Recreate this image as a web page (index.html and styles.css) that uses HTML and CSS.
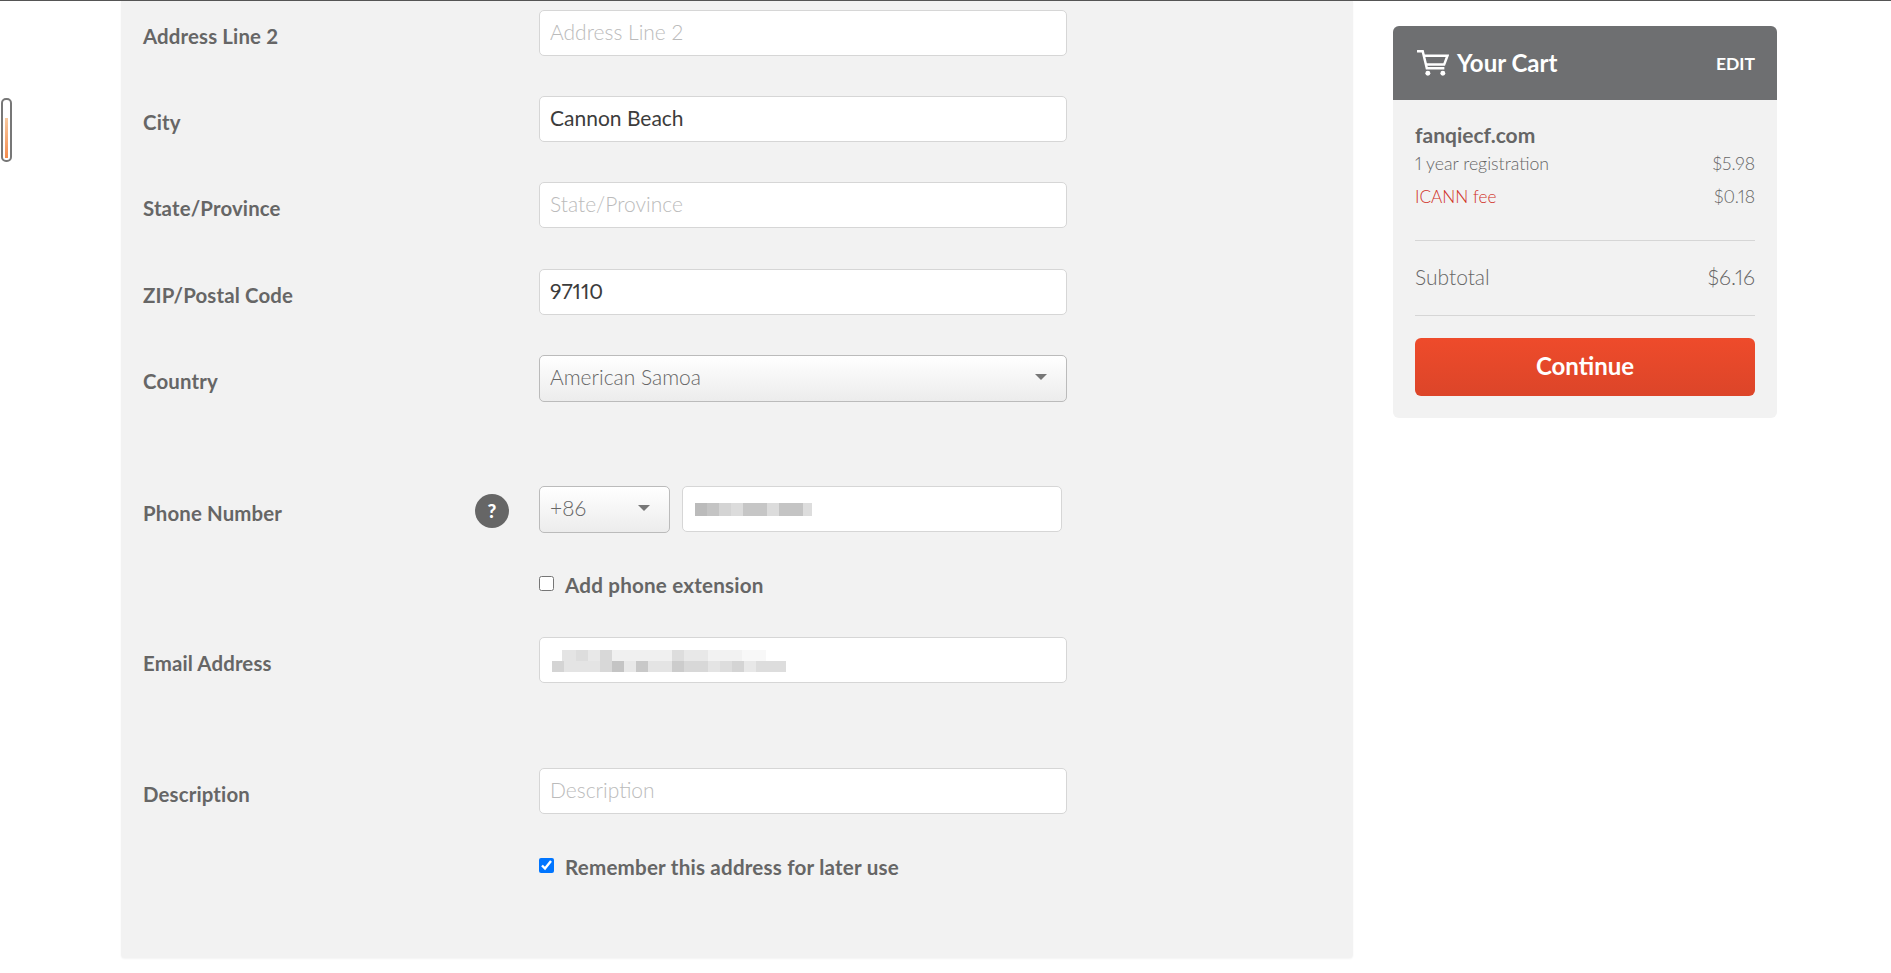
FILE: index.html
```html
<!DOCTYPE html>
<html lang="en">
<head>
<meta charset="utf-8">
<title>Checkout</title>
<link rel="stylesheet" href="styles.css">
</head>
<body>
<div class="meter"><div class="meter-fill"></div></div>
<main class="page">
  <form class="panel">
    <div class="row"><label class="label">Address Line 2</label><input class="input" placeholder="Address Line 2"></div>
    <div class="row"><label class="label">City</label><input class="input input-value" value="Cannon Beach"></div>
    <div class="row"><label class="label">State/Province</label><input class="input" placeholder="State/Province"></div>
    <div class="row"><label class="label">ZIP/Postal Code</label><input class="input input-value" value="97110"></div>
    <div class="row row-section"><label class="label">Country</label>
      <div class="select-wrap"><select class="select"><option>American Samoa</option></select></div>
    </div>
    <div class="row row-tight"><div class="label label-help"><label>Phone Number</label><span class="help">?</span></div>
      <div class="phone">
        <div class="select-wrap code-wrap"><select class="select code"><option>+86</option></select></div>
        <div class="masked phone-number"><input class="input"><span class="blur blur-phone"></span></div>
      </div>
    </div>
    <div class="row row-check"><span></span><label class="check"><input type="checkbox" class="box"><span>Add phone extension</span></label></div>
    <div class="row row-section"><label class="label">Email Address</label>
      <div class="masked"><input class="input"><span class="blur blur-email"></span></div>
    </div>
    <div class="row row-tight"><label class="label">Description</label><input class="input" placeholder="Description"></div>
    <div class="row row-check"><span></span><label class="check"><input type="checkbox" class="box" checked><span>Remember this address for later use</span></label></div>
  </form>
  <aside class="cart">
    <header class="cart-head">
      <svg class="cart-icon" viewBox="0 0 32 26" aria-hidden="true"><path d="M1 2h5.5l4 16.5h17" fill="none" stroke="#fff" stroke-width="2.4"/><path d="M7.5 6.5h23l-3.2 8.5H9.6" fill="none" stroke="#fff" stroke-width="2.4"/><circle cx="11.5" cy="23.5" r="2.4" fill="#fff"/><circle cx="26" cy="23.5" r="2.4" fill="#fff"/></svg>
      <span class="cart-title">Your Cart</span>
      <a class="cart-edit">EDIT</a>
    </header>
    <div class="cart-body">
      <div class="domain">fanqiecf.com</div>
      <div class="line"><span>1 year registration</span><span>$5.98</span></div>
      <div class="line line-fee"><span class="fee">ICANN fee</span><span>$0.18</span></div>
      <div class="subtotal"><span>Subtotal</span><span class="total">$6.16</span></div>
      <button type="button" class="continue">Continue</button>
    </div>
  </aside>
</main>
</body>
</html>
```
FILE: styles.css
```css
* { box-sizing: border-box; }
html, body { margin: 0; height: 973px; overflow: hidden; background: #fff; }
body { border-top: 1px solid #555; font-family: Lato, "Open Sans", sans-serif; color: #666; }
.page { display: flex; align-items: flex-start; padding-left: 121px; }
.panel { width: 1232px; height: 957px; padding: 9px 0 0 22px; background: #f2f2f2; border-radius: 0 0 4px 4px; box-shadow: 0 1px 2px rgba(0,0,0,.05); }
.row { display: grid; grid-template-columns: 396px 528px; height: 46px; margin-bottom: 40.2px; }
.row-section { margin-bottom: 85px; }
.row-tight { margin-bottom: 0; }
.row-check { margin-top: 41px; height: 64px; margin-bottom: 0; }
.label { padding-top: 7px; font-size: 20.4px; letter-spacing: .15px; font-weight: 700; line-height: 38px; color: #666; }
.label-help { display: flex; justify-content: space-between; align-items: flex-start; padding-right: 30px; padding-top: 8px; }
.help { width: 34px; height: 34px; border-radius: 50%; background: #666; color: #fff; font-size: 19px; font-weight: 900; line-height: 34px; text-align: center; letter-spacing: 0; }
.input { width: 100%; height: 46px; padding: 0 10px 3px; border: 1px solid #d6d6d6; border-radius: 5px; background: #fff; font: 300 21px Lato, sans-serif; font-variant-numeric: proportional-nums; color: #333; outline: none; }
.input::placeholder { color: #bbb; opacity: 1; }
.input-value { font-weight: 400; font-size: 21px; color: #3c3c3c; }
.select-wrap { position: relative; height: 47px; }
.select-wrap::after { content: ""; position: absolute; right: 20px; top: 19px; border: 6px solid transparent; border-top: 6px solid #777; border-bottom: 0; }
.select { width: 100%; height: 100%; padding: 0 10px 3px; appearance: none; border: 1px solid #bbb; border-radius: 5px; background: linear-gradient(#fff, #ececec); font: 300 21px Lato, sans-serif; color: #666; outline: none; }
.phone { display: flex; gap: 12px; width: 523px; }
.code-wrap { width: 131px; flex: none; }
.phone-number { flex: 1; }
.masked { position: relative; height: 46px; }
.blur { position: absolute; }
.blur-phone { left: 13px; top: 17px; width: 117px; height: 13px; background: linear-gradient(90deg, #bbb 0 12px, #c4c4c4 12px 24px, #d4d4d4 24px 36px, #dcdcdc 36px 48px, #c6c6c6 48px 72px, #dcdcdc 72px 84px, #c4c4c4 84px 108px, #ddd 108px 117px); }
.blur-email { left: 13px; top: 13px; width: 234px; height: 22px; background:
  linear-gradient(90deg, #d4d4d4 0 12px, #e4e4e4 12px 48px, #d8d8d8 48px 60px, #c4c4c4 60px 72px, #e8e8e8 72px 84px, #c8c8c8 84px 96px, #e4e4e4 96px 120px, #ccc 120px 132px, #d8d8d8 132px 156px, #e4e4e4 156px 168px, #ddd 168px 180px, #d4d4d4 180px 192px, #e8e8e8 192px 204px, #ddd 204px 234px) 0 100% / 100% 11px no-repeat,
  linear-gradient(90deg, #fff 0 10px, #e4e4e4 10px 24px, #ddd 24px 36px, #e8e8e8 36px 48px, #d8d8d8 48px 60px, #f0f0f0 60px 120px, #ddd 120px 132px, #e8e8e8 132px 156px, #f2f2f2 156px 190px, #f8f8f8 190px 214px, #fff 214px 234px) 0 0 / 100% 11px no-repeat; }
.check { display: flex; align-items: flex-start; gap: 11px; font-size: 20.6px; letter-spacing: .2px; font-weight: 700; line-height: 24px; color: #666; }
.box { width: 15px; height: 15px; margin: 3px 0 0; accent-color: #0075ff; }
.cart { width: 384px; margin: 25px 0 0 40px; border-radius: 6px; background: #f2f2f2; overflow: hidden; }
.cart-head { display: flex; align-items: center; height: 74px; padding: 0 22px 2px 23px; background: #6e6f71; color: #fff; }
.cart-icon { width: 33px; height: 27px; margin-right: 8px; }
.cart-title { flex: 1; font-size: 24px; font-weight: 700; }
.cart-edit { margin-top: 2px; font-size: 17.5px; font-weight: 700; }
.cart-body { padding: 23px 22px 22px; font-weight: 300; }
.domain { font-size: 21px; font-weight: 700; line-height: 26px; margin-top: -1px; }
.line { display: flex; justify-content: space-between; font-size: 17.7px; line-height: 26px; margin-top: 3px; font-variant-numeric: proportional-nums; }
.line-fee { margin-top: 7px; }
.fee { color: #d0301f; font-size: 17.2px; }
.subtotal { display: flex; justify-content: space-between; height: 76px; margin-top: 30px; border: solid #d6d6d6; border-width: 1px 0; font-size: 21px; line-height: 72px; font-variant-numeric: proportional-nums; }
.total { font-size: 21.5px; }
.continue { display: block; width: 100%; height: 58px; margin-top: 22px; padding-bottom: 5px; border: 0; border-radius: 6px; background: linear-gradient(#ee4b2b, #dc4529); color: #fff; font: 700 24px Lato, sans-serif; }
.meter { position: absolute; left: 1px; top: 98px; width: 11px; height: 64px; border: 2px solid #777; border-radius: 5px; background: #fff; }
.meter-fill { position: absolute; left: 2px; right: 2px; top: 18px; bottom: 2px; background: linear-gradient(#f8c9a0, #f58b4c); }
```
